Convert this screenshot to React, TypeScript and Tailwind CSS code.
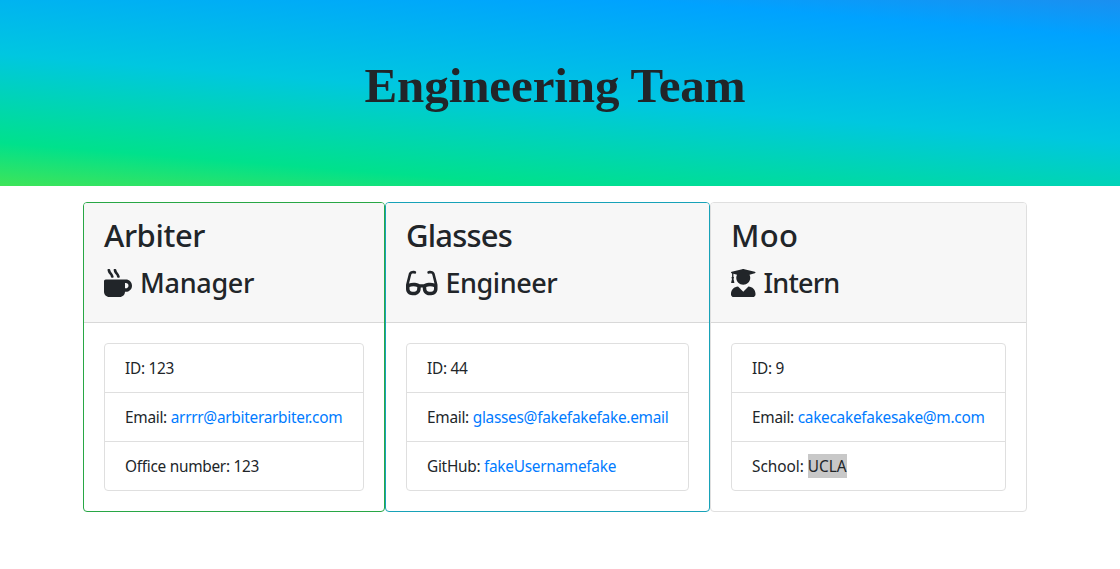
import React from "react";
import { FaMugHot, FaGlasses, FaUserGraduate } from "react-icons/fa";

type Row = { label: string; value?: string; link?: boolean; marked?: boolean; tracking?: string };
type Member = {
  name: string;
  nameTracking: string;
  role: string;
  roleTracking: string;
  icon: React.ReactNode;
  frame: string;
  rows: Row[];
};

const members: Member[] = [
  {
    name: "Arbiter",
    nameTracking: "tracking-[-0.4px]",
    role: "Manager",
    roleTracking: "tracking-[-0.3px]",
    icon: <FaMugHot className="h-7 w-7" />,
    frame: "w-[302px] border-[#28a745]",
    rows: [
      { label: "ID: 123" },
      { label: "Email: ", value: "arrrr@arbiterarbiter.com", link: true },
      { label: "Office number: 123" },
    ],
  },
  {
    name: "Glasses",
    nameTracking: "tracking-[-0.8px]",
    role: "Engineer",
    roleTracking: "tracking-[-0.45px]",
    icon: <FaGlasses className="h-7 w-[31.5px]" />,
    frame: "w-[325px] border-[#17a2b8]",
    rows: [
      { label: "ID: 44" },
      { label: "Email: ", value: "glasses@fakefakefake.email", link: true },
      { label: "GitHub: ", value: "fakeUsernamefake", link: true },
    ],
  },
  {
    name: "Moo",
    nameTracking: "tracking-[0.3px]",
    role: "Intern",
    roleTracking: "tracking-[-0.8px]",
    icon: <FaUserGraduate className="h-7 w-[24.5px]" />,
    frame: "w-[317px] border-[#dfdfdf]",
    rows: [
      { label: "ID: 9" },
      { label: "Email: ", value: "cakecakefakesake@m.com", link: true },
      { label: "School: ", value: "UCLA", marked: true, tracking: "tracking-[-0.04px]" },
    ],
  },
];

function Card({ member }: { member: Member }) {
  return (
    <section className={`flex h-[310px] flex-col overflow-hidden rounded border ${member.frame}`}>
      <header className="h-[120px] border-b border-[#d8d8d8] bg-[#f7f7f7] px-5 pt-[11px]">
        <h2 className={`mb-[14px] h-[38px] text-[31px] leading-[42px] font-medium whitespace-nowrap ${member.nameTracking}`}>
          {member.name}
        </h2>
        <h3 className={`flex h-[34px] items-center gap-2 text-[27px] leading-[34px] font-medium whitespace-nowrap ${member.roleTracking}`}>
          {member.icon}
          <span>{member.role}</span>
        </h3>
      </header>
      <div className="flex-1 p-5">
        <ul className="divide-y divide-[#dfdfdf] rounded border border-[#dfdfdf]">
          {member.rows.map((row) => (
            <li
              key={row.label}
              className={`h-[49px] px-5 pt-[13px] text-[15.4px] leading-6 whitespace-pre last:h-12 ${row.tracking ?? "tracking-[-0.28px]"}`}
            >
              {row.label}
              {row.link && <a className="text-[#007bff]">{row.value}</a>}
              {row.marked && <span className="bg-[#c8c8c8] pt-[2px] pr-px pb-px">{row.value}</span>}
            </li>
          ))}
        </ul>
      </div>
    </section>
  );
}

export default function App() {
  return (
    <div className="min-h-[569px] bg-white font-['Noto_Sans',sans-serif] text-[#212529]">
      <header className="flex h-[186px] justify-center bg-[linear-gradient(4.5deg,#3fe458_0%,#00e18c_15.7%,#00c7e0_48%,#00a2ff_86.2%,#1b8ff0_100%)] pt-[57px] pr-[10px]">
        <h1 className="font-['Liberation_Serif',serif] text-[49px] leading-[58px] font-bold tracking-[-0.1px]">Engineering Team</h1>
      </header>
      <main className="mt-4 flex pl-[83px]">
        {members.map((member) => (
          <Card key={member.name} member={member} />
        ))}
      </main>
    </div>
  );
}
